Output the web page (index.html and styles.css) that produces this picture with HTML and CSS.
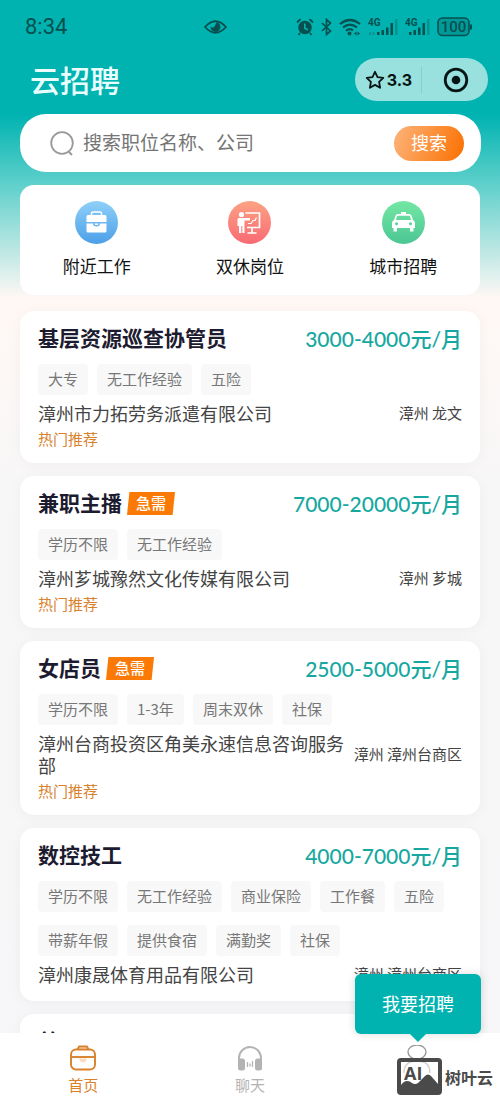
FILE: index.html
```html
<!DOCTYPE html>
<html lang="zh-CN">
<head>
<meta charset="utf-8">
<meta name="viewport" content="width=device-width, initial-scale=1">
<title>云招聘</title>
<link rel="stylesheet" href="styles.css">
</head>
<body>
<div class="app">
  <div class="status">
    <span class="time">8:34</span>
    <svg class="eye" width="23" height="16" viewBox="0 0 23 16"><path d="M1 8Q11.500-3.500 22 8Q11.500 19.500 1 8Z" fill="none" stroke="currentColor" stroke-width="1.800"/><path d="M12.500 3a5 5 0 1 1-6 4.500q2 2 3.500.500t2.500-5z" fill="currentColor"/></svg>
    <div class="indicators">
      <svg width="18" height="18" viewBox="0 0 18 18"><circle cx="9" cy="9.500" r="6.800" fill="currentColor"/><path d="M1 4.500 4.500 1.200M17 4.500 13.500 1.200M4 15l-1.500 2M14 15l1.500 2" stroke="currentColor" stroke-width="1.800"/><path d="M8.800 5.500v4.500l3 2" fill="none" stroke="#00b3b1" stroke-width="1.600"/></svg>
      <svg width="11" height="18" viewBox="0 0 11 18"><path d="M1 5l8.500 8L5.500 16.500V1.500L9.500 5 1 13" fill="none" stroke="currentColor" stroke-width="1.700"/></svg>
      <svg width="22" height="18" viewBox="0 0 22 18"><g fill="none" stroke="currentColor" stroke-width="2.200"><path d="M1 6Q11-2 21 6"/><path d="M4 9.500Q11 3.800 18 9.500"/><path d="M7 12.800Q11 9.800 14 12.500"/></g><circle cx="10.500" cy="15.500" r="2" fill="currentColor"/><path d="M15 15.500l2.500-2v4zM21 15.500l-2.500-2v4z" fill="currentColor"/></svg>
      <svg width="30" height="18" viewBox="0 0 30 18"><text class="net" x="0" y="8">4G</text><g fill="currentColor"><path d="M9 14h2.500v3H9zM13.500 12H16v5h-2.500zM18 9.500h2.500V17H18zM22.500 5H25v12h-2.500z"/><path opacity=".3" d="M27 1h2.500v16H27zM1 14h2v3H1zM4.500 14h2v3h-2z"/></g></svg>
      <svg width="25" height="18" viewBox="0 0 25 18"><text class="net" x="0" y="8">4G</text><g fill="currentColor"><path d="M4 14h2.500v3H4zM8.500 12H11v5H8.500zM13 9.500h2.500V17H13zM17.500 5H20v12h-2.500z"/><path opacity=".3" d="M22 1h2.500v16H22z"/></g></svg>
      <svg width="36" height="20" viewBox="0 0 36 20"><rect x="1" y="1" width="31" height="17.500" rx="4.500" fill="currentColor" fill-opacity=".25" stroke="currentColor" stroke-width="1.600"/><path d="M34 7.500v5" stroke="currentColor" stroke-width="2"/><text class="charge" x="16.500" y="15.300" text-anchor="middle">100</text></svg>
    </div>
  </div>

  <header class="topbar">
    <h1 class="logo">云招聘</h1>
    <div class="capsule">
      <button class="rating" type="button"><svg width="20" height="20" viewBox="0 0 20 20"><path d="M10 1.800l2.500 5.400 5.800.700-4.200 4 1 5.900-5.100-2.900-5.100 2.900 1-5.900-4.200-4 5.800-.700z" fill="none" stroke="currentColor" stroke-width="1.800" stroke-linejoin="round"/></svg>3.3</button>
      <button class="close" type="button" aria-label="关闭"><svg width="26" height="26" viewBox="0 0 26 26"><circle cx="13" cy="13" r="10.800" fill="none" stroke="currentColor" stroke-width="2.800"/><circle cx="13" cy="13" r="4.300" fill="currentColor"/></svg></button>
    </div>
  </header>

  <form class="search">
    <svg width="26" height="26" viewBox="0 0 26 26"><circle cx="13" cy="13" r="10.800" fill="none" stroke="#999" stroke-width="1.800"/><path d="M20 22l3 3" stroke="#999" stroke-width="2"/></svg>
    <input class="query" type="text" aria-label="搜索" placeholder="搜索职位名称、公司">
    <button class="go" type="button">搜索</button>
  </form>

  <nav class="cats">
    <a class="cat" href="#near">
      <svg width="43" height="43" viewBox="0 0 43 43"><defs><linearGradient id="b" x2="0" y2="1"><stop stop-color="#8fd0f8"/><stop offset="1" stop-color="#4c9fe8"/></linearGradient></defs><circle cx="21.500" cy="21.500" r="21.500" fill="url(#b)"/><path d="M16.500 14v-1.500q0-1.500 1.500-1.500h7q1.500 0 1.500 1.500V14" fill="none" stroke="#fff" stroke-width="1.600"/><path d="M13 14h17q1.500 0 1.500 1.500V21h-20v-5.500Q11.500 14 13 14zM11.500 22.500H18q0 3 3.500 3t3.500-3h6.500V30q0 1.500-1.500 1.500H13q-1.500 0-1.500-1.500zM19.500 22.500h4q0 1.500-2 1.500t-2-1.500z" fill="#fff"/></svg>
      附近工作</a>
    <a class="cat" href="#weekend">
      <svg width="43" height="43" viewBox="0 0 43 43"><defs><linearGradient id="r" x2="0" y2="1"><stop stop-color="#fca283"/><stop offset="1" stop-color="#f96a74"/></linearGradient></defs><circle cx="21.500" cy="21.500" r="21.500" fill="url(#r)"/><circle cx="13.500" cy="13.500" r="2.600" fill="#fff"/><path d="M11 17h11v2.500h-5.500V32h-2.200v-7h-1v7H11v-7H9.500v-6.500Q9.500 17 11 17z" fill="#fff"/><path d="M17.500 12h14v14.500H19M24 27v4.500M19.500 32h9" fill="none" stroke="#fff" stroke-width="1.700"/><path d="M20 22.500h3l2-3h2l1.500-3" fill="none" stroke="#fff" stroke-width="1.200"/></svg>
      双休岗位</a>
    <a class="cat" href="#city">
      <svg width="43" height="43" viewBox="0 0 43 43"><defs><linearGradient id="g" x2="0" y2="1"><stop stop-color="#73e7a3"/><stop offset="1" stop-color="#4cc694"/></linearGradient></defs><circle cx="21.500" cy="21.500" r="21.500" fill="url(#g)"/><path fill-rule="evenodd" d="M19 11h5v2h3q2 0 2.700 2l1.300 4q2 1 2 3v5h-1.500v3.500h-3.500V27H15v3.500h-3.500V27H10v-5q0-2 2-3l1.300-4q.700-2 2.700-2h3zM16 14.800q-.700 0-1 .700L14 19h15l-1-3.500q-.300-.700-1-.700zM14.500 21.200a1.600 1.600 0 1 0 .01 0zM28.500 21.200a1.600 1.600 0 1 0 .01 0z" fill="#fff"/></svg>
      城市招聘</a>
  </nav>

  <main class="jobs">
    <article class="job">
      <div class="head"><h2 class="title">基层资源巡查协管员</h2><span class="pay">3000-4000元/月</span></div>
      <ul class="tags"><li>大专</li><li>无工作经验</li><li>五险</li></ul>
      <div class="firm"><span>漳州市力拓劳务派遣有限公司</span><span class="place">漳州 龙文</span></div>
      <p class="hot">热门推荐</p>
    </article>
    <article class="job">
      <div class="head"><h2 class="title">兼职主播</h2><span class="urgent">急需</span><span class="pay">7000-20000元/月</span></div>
      <ul class="tags"><li>学历不限</li><li>无工作经验</li></ul>
      <div class="firm"><span>漳州芗城豫然文化传媒有限公司</span><span class="place">漳州 芗城</span></div>
      <p class="hot">热门推荐</p>
    </article>
    <article class="job">
      <div class="head"><h2 class="title">女店员</h2><span class="urgent">急需</span><span class="pay">2500-5000元/月</span></div>
      <ul class="tags"><li>学历不限</li><li>1-3年</li><li>周末双休</li><li>社保</li></ul>
      <div class="firm"><span>漳州台商投资区角美永速信息咨询服务部</span><span class="place">漳州 漳州台商区</span></div>
      <p class="hot">热门推荐</p>
    </article>
    <article class="job">
      <div class="head"><h2 class="title">数控技工</h2><span class="pay">4000-7000元/月</span></div>
      <ul class="tags"><li>学历不限</li><li>无工作经验</li><li>商业保险</li><li>工作餐</li><li>五险</li><li>带薪年假</li><li>提供食宿</li><li>满勤奖</li><li>社保</li></ul>
      <div class="firm"><span>漳州康晟体育用品有限公司</span><span class="place">漳州 漳州台商区</span></div>
    </article>
    <article class="job">
      <div class="head"><h2 class="title">普工</h2></div>
    </article>
  </main>

  <nav class="tabs">
    <a class="tab active" href="#home">
      <svg width="28" height="26" viewBox="0 0 28 26"><path d="M8.500 4.500 10 1.500h8l1.500 3" fill="#fbe3c8" stroke="currentColor" stroke-width="1.800" stroke-linejoin="round"/><rect x="2" y="4.500" width="24" height="20" rx="5" fill="none" stroke="currentColor" stroke-width="1.900"/><path d="M2 12h24" stroke="currentColor" stroke-width="1.900"/><path d="M10 13.500h8q-1 4-4 4t-4-4z" fill="#fbdcc0"/></svg>
      首页</a>
    <a class="tab" href="#chat">
      <svg width="28" height="26" viewBox="0 0 28 26"><path d="M3 16v-3a11 11 0 0 1 22 0v3" fill="none" stroke="currentColor" stroke-width="1.900"/><rect x="2" y="13.500" width="7" height="12" rx="2.500" fill="currentColor"/><rect x="19" y="13.500" width="7" height="12" rx="2.500" fill="currentColor"/><path d="M11.500 17v5M14 18.500v3M16.500 16v6" stroke="currentColor" stroke-width="1.300"/></svg>
      聊天</a>
    <a class="tab" href="#me" aria-label="我的">
      <svg width="28" height="30" viewBox="0 0 28 30"><g fill="none" stroke="#999" stroke-width="1.400"><ellipse cx="14" cy="7" rx="9" ry="7"/><path d="M1 28q0-12 13-12t13 12"/></g></svg>
    </a>
    <button class="tip" type="button">我要招聘</button>
    <div class="mark">
      <svg width="45" height="37" viewBox="0 0 45 37"><rect x="2" y="2" width="41" height="33" rx="2" fill="#fff" fill-opacity=".55" stroke="currentColor" stroke-width="4"/><path d="M4 27q3-4 6-4 3 0 5 2 3 2 6 0l7-7q3-3 6 0l7 8v8H4z" fill="currentColor"/><text class="ai" x="7" y="22">AI</text></svg>
      树叶云
    </div>
  </nav>
</div>
</body>
</html>
```
FILE: styles.css
```css
* { box-sizing: border-box; margin: 0; padding: 0; }

body {
  font-family: "Noto Sans CJK SC", sans-serif;
  color: #333;
}

button, input { font: inherit; border: 0; background: none; }
a { color: inherit; text-decoration: none; }
svg { display: block; flex: none; }

.app {
  display: flex;
  flex-direction: column;
  height: 100vh;
  overflow: hidden;
  background: linear-gradient(#00b3b1 0, #00b3b1 115px, #5ccfca 182px, #fff8f5 298px, #f8f7f7 480px, #f6f6f8 100%);
}

.status {
  display: grid;
  grid-template-columns: 40% auto 1fr;
  align-items: center;
  height: 54px;
  padding: 0 27px 0 25px;
  color: #06504f;
}
.time { font: 400 22px/24px Roboto, sans-serif; }
.indicators {
  display: flex;
  align-items: center;
  justify-content: flex-end;
  gap: 7px;
}
.net { font: 700 10px Roboto, sans-serif; fill: currentColor; }
.charge { font: 500 15px Roboto, sans-serif; fill: currentColor; }

.topbar {
  display: flex;
  align-items: center;
  justify-content: space-between;
  padding: 4px 12px 13px 30px;
}
.logo { font-size: 30px; line-height: 43px; font-weight: 500; color: #e9ffff; }
.capsule {
  display: flex;
  align-items: center;
  height: 43px;
  border-radius: 22px;
  background: #99e1df;
  color: #061414;
}
.rating {
  display: flex;
  align-items: center;
  gap: 2px;
  height: 26px;
  padding: 0 9px 0 10px;
  border-right: 1px solid #83cfcd;
  font: 700 16px/26px Inter, sans-serif;
  color: inherit;
}
.close { padding: 0 19px 0 21px; color: inherit; }

.search {
  display: flex;
  align-items: center;
  height: 58px;
  margin: 0 19px 0 20px;
  padding: 0 17px 0 29px;
  border-radius: 26px;
  background: #fff;
}
.query {
  flex: 1;
  min-width: 0;
  padding: 0 0 2px 8px;
  font-size: 19px;
  line-height: 28px;
  color: #333;
}
.query::placeholder { color: #757575; opacity: 1; }
.go {
  height: 35px;
  padding: 0 17px 2px;
  border-radius: 18px;
  background: linear-gradient(110deg, #fcb47a, #fb7000);
  color: #fff;
  font-size: 18px;
  line-height: 33px;
}

.cats {
  display: grid;
  grid-template-columns: repeat(3, 1fr);
  margin: 13px 20px 0;
  padding: 16px 0;
  border-radius: 14px;
  background: #fff;
}
.cat {
  display: flex;
  flex-direction: column;
  align-items: center;
  gap: 9px;
  font-size: 17px;
  line-height: 26px;
  color: #111;
}

.jobs {
  flex: 1;
  min-height: 0;
  display: flex;
  flex-direction: column;
  gap: 13px;
  padding: 16px 20px 0;
  overflow: hidden;
}
.job {
  flex: none;
  padding: 14px 18px 12px;
  border-radius: 14px;
  background: #fff;
  box-shadow: 0 2px 14px #0000000a;
}
.head { display: flex; align-items: flex-start; }
.title { font-size: 21px; line-height: 24px; font-weight: 700; color: #1d1b30; }
.urgent {
  margin: 2px 0 0 5px;
  padding: 0 9px 1px;
  background: #fb7a05;
  clip-path: polygon(5% 0, 100% 0, 95% 100%, 0 100%);
  color: #fff;
  font-size: 15px;
  line-height: 22px;
  font-weight: 500;
}
.pay {
  margin-left: auto;
  font: 500 21px/28px Lato, "Noto Sans CJK SC", sans-serif;
  color: #16a8a0;
}
.tags {
  display: flex;
  flex-wrap: wrap;
  gap: 13px 9px;
  margin: 11px 0 7px;
  list-style: none;
}
.tags li {
  padding: 0 10px 2px;
  border-radius: 4px;
  background: #f8f8f8;
  color: #777;
  font-size: 15px;
  line-height: 29px;
}
.firm {
  display: flex;
  align-items: center;
  justify-content: space-between;
  margin-bottom: 4px;
  font-size: 18px;
  line-height: 22px;
  color: #444;
}
.place { flex: none; font-size: 15px; }
.hot { padding-bottom: 1px; font-size: 15px; line-height: 22px; color: #d9822b; }

.tabs {
  position: relative;
  display: grid;
  grid-template-columns: repeat(3, 1fr);
  height: 73px;
  padding-top: 12px;
  background: #fff;
}
.tab {
  display: flex;
  flex-direction: column;
  align-items: center;
  gap: 4px;
  font-size: 15px;
  line-height: 20px;
  color: #b3b3b3;
}
.active { color: #d9822b; }
.tip {
  position: absolute;
  right: 19px;
  bottom: 72px;
  padding: 14px 27px 16px;
  border-radius: 6px;
  background: #00b3b1;
  box-shadow: 0 0 8px #00000026;
  color: #fff;
  font-size: 18px;
  line-height: 30px;
}
.tip::after {
  content: "";
  position: absolute;
  top: 100%;
  left: 50%;
  border: 8px solid transparent;
  border-top-color: #00b3b1;
  border-bottom: 0;
  transform: translateX(-50%);
}
.mark {
  position: absolute;
  right: 7px;
  bottom: 11px;
  display: flex;
  align-items: center;
  gap: 3px;
  color: #4a4a4a;
  font-size: 16px;
  line-height: 24px;
  font-weight: 700;
}
.ai { font: 700 18px "Open Sans", sans-serif; fill: currentColor; }
```
